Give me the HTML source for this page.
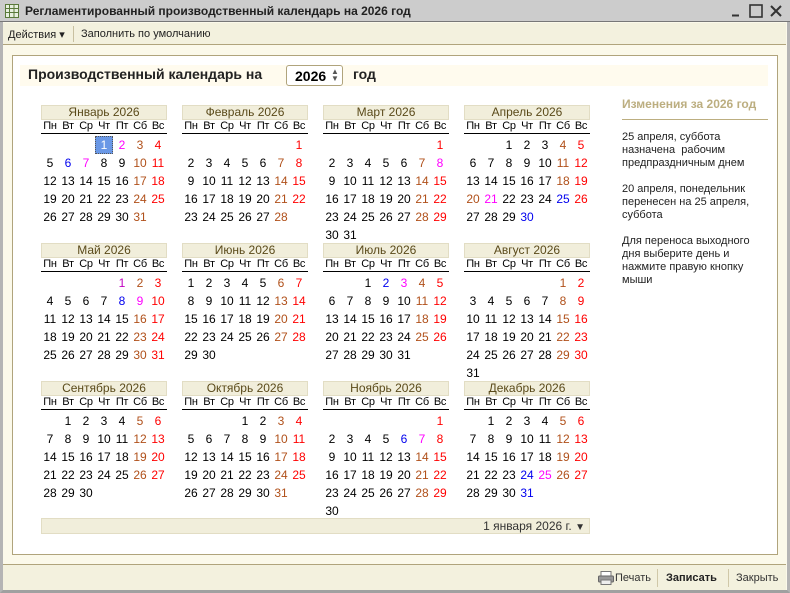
<!DOCTYPE html>
<html><head><meta charset="utf-8"><style>
*{margin:0;padding:0;box-sizing:border-box}
body{width:790px;height:593px;overflow:hidden;background:#fbf9ea;font-family:"Liberation Sans",sans-serif;position:relative;color:#000}
.abs{position:absolute}
#title{left:0;top:0;width:790px;height:22px;background:#cccccc;border-bottom:1px solid #777}
#title span{position:absolute;left:25px;top:4px;font-size:12px;font-weight:bold;color:#222}
#win{left:0;top:22px;width:790px;height:571px;border:3px solid #b4b4b4;border-top:none;border-bottom:3px solid #a0a0a0}
#tb{left:3px;top:23px;width:783px;height:22px;background:#f3f1de;border-bottom:1px solid #b0a47c;font-size:11px;color:#222}
#panel{left:12px;top:55px;width:766px;height:500px;background:#fff;border:1px solid #b0a47c}
#band{left:20px;top:65px;width:748px;height:21px;background:#fffbee}
#bot{left:3px;top:564px;width:783px;height:26px;background:#f3f1de;border-top:1px solid #b0a47c;font-size:11px;color:#333}
.m{position:absolute;width:126px}
.mh{height:15px;background:#f1eedb;border:1px solid #e2ddc4;text-align:center;font-size:12px;line-height:13px;color:#5a4a1a}
table{border-collapse:collapse;width:126px;table-layout:fixed}
th{font-weight:normal;font-size:11px;height:13px;line-height:12px;border-bottom:1px solid #000;color:#000;width:18px;text-align:center;letter-spacing:-0.3px}
td{height:18px;font-size:12px;text-align:center;width:18px;padding:0}
tr.d td:nth-child(6){color:#b0501a}
tr.d td:nth-child(7){color:#f00}
tr.d td.mg{color:#f0f}
tr.d td.bl{color:#00e}
tr.d td.br{color:#b0501a}
td.sel{background:#6a98e6;color:#fff;outline:1px dotted #555;outline-offset:-1px}
</style></head><body>
<div id="title" class="abs">
<svg class="abs" style="left:5px;top:4px" width="14" height="14"><rect x="0.5" y="0.5" width="13" height="13" fill="#e8f0e0" stroke="#5a7a3a"/><path d="M0 4.5H14M0 8.5H14M4.5 0V14M9 0V14" stroke="#5a7a3a"/></svg>
<span>Регламентированный производственный календарь на 2026 год</span>
<svg class="abs" style="left:730px;top:4px" width="55" height="14"><path d="M2 11.5H9" stroke="#333" stroke-width="2"/><rect x="20" y="1" width="12" height="12" fill="none" stroke="#333" stroke-width="1.6"/><path d="M41 2L51 12M51 2L41 12" stroke="#333" stroke-width="2"/></svg>
</div>
<div id="win" class="abs"></div>
<div id="tb" class="abs"><span class="abs" style="left:5px;top:5px">Действия ▾</span><span class="abs" style="left:70px;top:3px;width:1px;height:16px;background:#c8c0a0"></span><span class="abs" style="left:78px;top:5px">Заполнить по умолчанию</span></div>
<div id="panel" class="abs"></div>
<div id="band" class="abs"></div>
<div class="abs" style="left:28px;top:66px;font-size:14px;font-weight:bold;color:#222">Производственный календарь на</div>
<div class="abs" style="left:286px;top:65px;width:57px;height:21px;border:1px solid #b0a47c;border-radius:3px;background:#fff;font-size:14px;font-weight:bold;padding:2px 0 0 8px">2026<span class="abs" style="left:44px;top:2px;font-size:8px;line-height:7px;color:#555">▲<br>▼</span></div>
<div class="abs" style="left:353px;top:66px;font-size:14px;font-weight:bold;color:#222">год</div>

<div class="m" style="left:41px;top:105px"><div class="mh">Январь 2026</div><table><tr><th>Пн</th><th>Вт</th><th>Ср</th><th>Чт</th><th>Пт</th><th>Сб</th><th>Вс</th></tr><tr><td colspan=7 style="height:3px"></td></tr>
<tr class="d"><td></td><td></td><td></td><td class="sel">1</td><td class="mg">2</td><td>3</td><td>4</td></tr>
<tr class="d"><td>5</td><td class="bl">6</td><td class="mg">7</td><td>8</td><td>9</td><td>10</td><td>11</td></tr>
<tr class="d"><td>12</td><td>13</td><td>14</td><td>15</td><td>16</td><td>17</td><td>18</td></tr>
<tr class="d"><td>19</td><td>20</td><td>21</td><td>22</td><td>23</td><td>24</td><td>25</td></tr>
<tr class="d"><td>26</td><td>27</td><td>28</td><td>29</td><td>30</td><td>31</td><td></td></tr></table></div>

<div class="m" style="left:182px;top:105px"><div class="mh">Февраль 2026</div><table><tr><th>Пн</th><th>Вт</th><th>Ср</th><th>Чт</th><th>Пт</th><th>Сб</th><th>Вс</th></tr><tr><td colspan=7 style="height:3px"></td></tr>
<tr class="d"><td></td><td></td><td></td><td></td><td></td><td></td><td>1</td></tr>
<tr class="d"><td>2</td><td>3</td><td>4</td><td>5</td><td>6</td><td>7</td><td>8</td></tr>
<tr class="d"><td>9</td><td>10</td><td>11</td><td>12</td><td>13</td><td>14</td><td>15</td></tr>
<tr class="d"><td>16</td><td>17</td><td>18</td><td>19</td><td>20</td><td>21</td><td>22</td></tr>
<tr class="d"><td>23</td><td>24</td><td>25</td><td>26</td><td>27</td><td>28</td><td></td></tr></table></div>

<div class="m" style="left:323px;top:105px"><div class="mh">Март 2026</div><table><tr><th>Пн</th><th>Вт</th><th>Ср</th><th>Чт</th><th>Пт</th><th>Сб</th><th>Вс</th></tr><tr><td colspan=7 style="height:3px"></td></tr>
<tr class="d"><td></td><td></td><td></td><td></td><td></td><td></td><td>1</td></tr>
<tr class="d"><td>2</td><td>3</td><td>4</td><td>5</td><td>6</td><td>7</td><td class="mg">8</td></tr>
<tr class="d"><td>9</td><td>10</td><td>11</td><td>12</td><td>13</td><td>14</td><td>15</td></tr>
<tr class="d"><td>16</td><td>17</td><td>18</td><td>19</td><td>20</td><td>21</td><td>22</td></tr>
<tr class="d"><td>23</td><td>24</td><td>25</td><td>26</td><td>27</td><td>28</td><td>29</td></tr>
<tr class="d"><td>30</td><td>31</td><td></td><td></td><td></td><td></td><td></td></tr></table></div>

<div class="m" style="left:464px;top:105px"><div class="mh">Апрель 2026</div><table><tr><th>Пн</th><th>Вт</th><th>Ср</th><th>Чт</th><th>Пт</th><th>Сб</th><th>Вс</th></tr><tr><td colspan=7 style="height:3px"></td></tr>
<tr class="d"><td></td><td></td><td>1</td><td>2</td><td>3</td><td>4</td><td>5</td></tr>
<tr class="d"><td>6</td><td>7</td><td>8</td><td>9</td><td>10</td><td>11</td><td>12</td></tr>
<tr class="d"><td>13</td><td>14</td><td>15</td><td>16</td><td>17</td><td>18</td><td>19</td></tr>
<tr class="d"><td class="br">20</td><td class="mg">21</td><td>22</td><td>23</td><td>24</td><td class="bl">25</td><td>26</td></tr>
<tr class="d"><td>27</td><td>28</td><td>29</td><td class="bl">30</td><td></td><td></td><td></td></tr></table></div>

<div class="m" style="left:41px;top:243px"><div class="mh">Май 2026</div><table><tr><th>Пн</th><th>Вт</th><th>Ср</th><th>Чт</th><th>Пт</th><th>Сб</th><th>Вс</th></tr><tr><td colspan=7 style="height:3px"></td></tr>
<tr class="d"><td></td><td></td><td></td><td></td><td class="mg" style="color:#c000c0">1</td><td>2</td><td>3</td></tr>
<tr class="d"><td>4</td><td>5</td><td>6</td><td>7</td><td class="bl">8</td><td class="mg">9</td><td>10</td></tr>
<tr class="d"><td>11</td><td>12</td><td>13</td><td>14</td><td>15</td><td>16</td><td>17</td></tr>
<tr class="d"><td>18</td><td>19</td><td>20</td><td>21</td><td>22</td><td>23</td><td>24</td></tr>
<tr class="d"><td>25</td><td>26</td><td>27</td><td>28</td><td>29</td><td>30</td><td>31</td></tr></table></div>

<div class="m" style="left:182px;top:243px"><div class="mh">Июнь 2026</div><table><tr><th>Пн</th><th>Вт</th><th>Ср</th><th>Чт</th><th>Пт</th><th>Сб</th><th>Вс</th></tr><tr><td colspan=7 style="height:3px"></td></tr>
<tr class="d"><td>1</td><td>2</td><td>3</td><td>4</td><td>5</td><td>6</td><td>7</td></tr>
<tr class="d"><td>8</td><td>9</td><td>10</td><td>11</td><td>12</td><td>13</td><td>14</td></tr>
<tr class="d"><td>15</td><td>16</td><td>17</td><td>18</td><td>19</td><td>20</td><td>21</td></tr>
<tr class="d"><td>22</td><td>23</td><td>24</td><td>25</td><td>26</td><td>27</td><td>28</td></tr>
<tr class="d"><td>29</td><td>30</td><td></td><td></td><td></td><td></td><td></td></tr></table></div>

<div class="m" style="left:323px;top:243px"><div class="mh">Июль 2026</div><table><tr><th>Пн</th><th>Вт</th><th>Ср</th><th>Чт</th><th>Пт</th><th>Сб</th><th>Вс</th></tr><tr><td colspan=7 style="height:3px"></td></tr>
<tr class="d"><td></td><td></td><td>1</td><td class="bl">2</td><td class="mg">3</td><td>4</td><td>5</td></tr>
<tr class="d"><td>6</td><td>7</td><td>8</td><td>9</td><td>10</td><td>11</td><td>12</td></tr>
<tr class="d"><td>13</td><td>14</td><td>15</td><td>16</td><td>17</td><td>18</td><td>19</td></tr>
<tr class="d"><td>20</td><td>21</td><td>22</td><td>23</td><td>24</td><td>25</td><td>26</td></tr>
<tr class="d"><td>27</td><td>28</td><td>29</td><td>30</td><td>31</td><td></td><td></td></tr></table></div>

<div class="m" style="left:464px;top:243px"><div class="mh">Август 2026</div><table><tr><th>Пн</th><th>Вт</th><th>Ср</th><th>Чт</th><th>Пт</th><th>Сб</th><th>Вс</th></tr><tr><td colspan=7 style="height:3px"></td></tr>
<tr class="d"><td></td><td></td><td></td><td></td><td></td><td>1</td><td>2</td></tr>
<tr class="d"><td>3</td><td>4</td><td>5</td><td>6</td><td>7</td><td>8</td><td>9</td></tr>
<tr class="d"><td>10</td><td>11</td><td>12</td><td>13</td><td>14</td><td>15</td><td>16</td></tr>
<tr class="d"><td>17</td><td>18</td><td>19</td><td>20</td><td>21</td><td>22</td><td>23</td></tr>
<tr class="d"><td>24</td><td>25</td><td>26</td><td>27</td><td>28</td><td>29</td><td>30</td></tr>
<tr class="d"><td>31</td><td></td><td></td><td></td><td></td><td></td><td></td></tr></table></div>

<div class="m" style="left:41px;top:381px"><div class="mh">Сентябрь 2026</div><table><tr><th>Пн</th><th>Вт</th><th>Ср</th><th>Чт</th><th>Пт</th><th>Сб</th><th>Вс</th></tr><tr><td colspan=7 style="height:3px"></td></tr>
<tr class="d"><td></td><td>1</td><td>2</td><td>3</td><td>4</td><td>5</td><td>6</td></tr>
<tr class="d"><td>7</td><td>8</td><td>9</td><td>10</td><td>11</td><td>12</td><td>13</td></tr>
<tr class="d"><td>14</td><td>15</td><td>16</td><td>17</td><td>18</td><td>19</td><td>20</td></tr>
<tr class="d"><td>21</td><td>22</td><td>23</td><td>24</td><td>25</td><td>26</td><td>27</td></tr>
<tr class="d"><td>28</td><td>29</td><td>30</td><td></td><td></td><td></td><td></td></tr></table></div>

<div class="m" style="left:182px;top:381px"><div class="mh">Октябрь 2026</div><table><tr><th>Пн</th><th>Вт</th><th>Ср</th><th>Чт</th><th>Пт</th><th>Сб</th><th>Вс</th></tr><tr><td colspan=7 style="height:3px"></td></tr>
<tr class="d"><td></td><td></td><td></td><td>1</td><td>2</td><td>3</td><td>4</td></tr>
<tr class="d"><td>5</td><td>6</td><td>7</td><td>8</td><td>9</td><td>10</td><td>11</td></tr>
<tr class="d"><td>12</td><td>13</td><td>14</td><td>15</td><td>16</td><td>17</td><td>18</td></tr>
<tr class="d"><td>19</td><td>20</td><td>21</td><td>22</td><td>23</td><td>24</td><td>25</td></tr>
<tr class="d"><td>26</td><td>27</td><td>28</td><td>29</td><td>30</td><td>31</td><td></td></tr></table></div>

<div class="m" style="left:323px;top:381px"><div class="mh">Ноябрь 2026</div><table><tr><th>Пн</th><th>Вт</th><th>Ср</th><th>Чт</th><th>Пт</th><th>Сб</th><th>Вс</th></tr><tr><td colspan=7 style="height:3px"></td></tr>
<tr class="d"><td></td><td></td><td></td><td></td><td></td><td></td><td>1</td></tr>
<tr class="d"><td>2</td><td>3</td><td>4</td><td>5</td><td class="bl">6</td><td class="mg">7</td><td>8</td></tr>
<tr class="d"><td>9</td><td>10</td><td>11</td><td>12</td><td>13</td><td>14</td><td>15</td></tr>
<tr class="d"><td>16</td><td>17</td><td>18</td><td>19</td><td>20</td><td>21</td><td>22</td></tr>
<tr class="d"><td>23</td><td>24</td><td>25</td><td>26</td><td>27</td><td>28</td><td>29</td></tr>
<tr class="d"><td>30</td><td></td><td></td><td></td><td></td><td></td><td></td></tr></table></div>

<div class="m" style="left:464px;top:381px"><div class="mh">Декабрь 2026</div><table><tr><th>Пн</th><th>Вт</th><th>Ср</th><th>Чт</th><th>Пт</th><th>Сб</th><th>Вс</th></tr><tr><td colspan=7 style="height:3px"></td></tr>
<tr class="d"><td></td><td>1</td><td>2</td><td>3</td><td>4</td><td>5</td><td>6</td></tr>
<tr class="d"><td>7</td><td>8</td><td>9</td><td>10</td><td>11</td><td>12</td><td>13</td></tr>
<tr class="d"><td>14</td><td>15</td><td>16</td><td>17</td><td>18</td><td>19</td><td>20</td></tr>
<tr class="d"><td>21</td><td>22</td><td>23</td><td class="bl">24</td><td class="mg">25</td><td>26</td><td>27</td></tr>
<tr class="d"><td>28</td><td>29</td><td>30</td><td class="bl">31</td><td></td><td></td><td></td></tr></table></div>

<div class="abs" style="left:41px;top:518px;width:549px;height:16px;background:#f1eedb;border:1px solid #e2ddc4;font-size:12px;color:#333;text-align:right;padding-right:4px;line-height:14px">1 января 2026 г. <span style="font-size:10px;color:#333">▼</span></div>

<div class="abs" style="left:622px;top:97px;font-size:12px;font-weight:bold;color:#bcae80">Изменения за 2026 год</div>
<div class="abs" style="left:622px;top:119px;width:146px;height:1px;background:#bcae80"></div>
<div class="abs" style="left:622px;top:131px;width:140px;font-size:11px;line-height:13px;color:#222">25 апреля, суббота назначена&nbsp; рабочим предпраздничным днем<br><br>20 апреля, понедельник перенесен на 25 апреля, суббота<br><br>Для переноса выходного дня выберите день и нажмите правую кнопку мыши</div>

<div id="bot" class="abs">
<svg class="abs" style="left:595px;top:6px" width="16" height="14"><rect x="3" y="0.5" width="10" height="5" fill="#fff" stroke="#777"/><rect x="0.5" y="5" width="15" height="6" rx="1" fill="#999" stroke="#666"/><rect x="3" y="9" width="10" height="4.5" fill="#eee" stroke="#777"/></svg>
<span class="abs" style="left:612px;top:7px">Печать</span>
<span class="abs" style="left:654px;top:4px;width:1px;height:18px;background:#d0c8a8"></span>
<span class="abs" style="left:663px;top:7px;font-weight:bold;color:#222">Записать</span>
<span class="abs" style="left:725px;top:4px;width:1px;height:18px;background:#d0c8a8"></span>
<span class="abs" style="left:733px;top:7px">Закрыть</span>
</div>
</body></html>
